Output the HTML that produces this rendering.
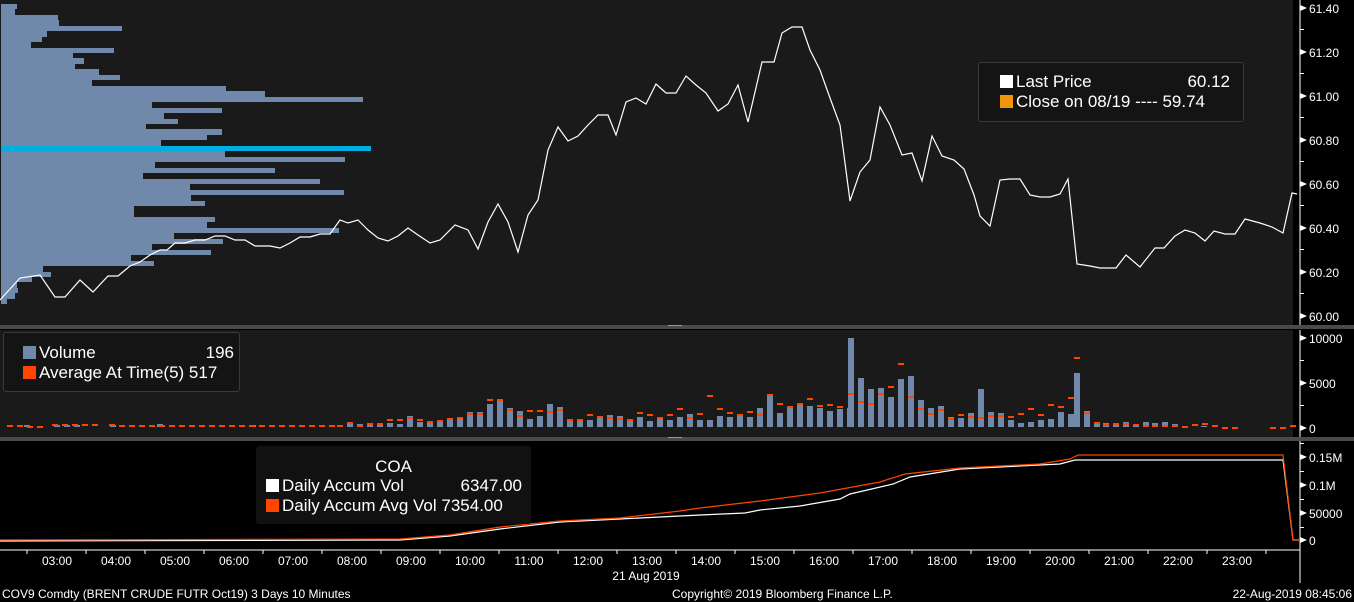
<!DOCTYPE html>
<html><head><meta charset="utf-8"><style>
html,body{margin:0;padding:0;background:#000;}
body{width:1354px;height:602px;overflow:hidden;position:relative;font-family:"Liberation Sans",sans-serif;}
svg{position:absolute;left:0;top:0;}
.lg{position:absolute;background:#141414;border:1px solid #3a3a3a;border-radius:3px;color:#fff;font-size:17px;line-height:20px;}
.sq{display:inline-block;width:13px;height:13px;vertical-align:-1px;margin-right:3px;}
.ax{font-size:12px;fill:#fff;}
</style></head><body>
<svg width="1354" height="602" xmlns="http://www.w3.org/2000/svg">
<rect x="0" y="0" width="1293" height="325" fill="#1a1a1a"/>
<rect x="0" y="330" width="1293" height="107" fill="#1a1a1a"/>
<rect x="0" y="325" width="1354" height="4" fill="#4a4a4a"/>
<rect x="0" y="437" width="1354" height="4" fill="#4a4a4a"/>
<rect x="668" y="325" width="14" height="1" fill="#999"/>
<rect x="668" y="437" width="14" height="1" fill="#999"/>
<g fill="#7089ab" id="prof"></g>
<g fill="#7089ab">
<rect x="1" y="4" width="16" height="5"/><rect x="1" y="9" width="14" height="6"/><rect x="1" y="15" width="57" height="5"/><rect x="1" y="20" width="58" height="6"/><rect x="1" y="26" width="121" height="5"/><rect x="1" y="31" width="46" height="6"/><rect x="1" y="37" width="41" height="5"/><rect x="1" y="42" width="30" height="6"/><rect x="1" y="48" width="113" height="5"/><rect x="1" y="53" width="72" height="5"/><rect x="1" y="58" width="83" height="6"/><rect x="1" y="64" width="74" height="5"/><rect x="1" y="69" width="98" height="6"/><rect x="1" y="75" width="119" height="5"/><rect x="1" y="80" width="91" height="6"/><rect x="1" y="86" width="225" height="5"/><rect x="1" y="91" width="264" height="6"/><rect x="1" y="97" width="362" height="5"/><rect x="1" y="102" width="151" height="6"/><rect x="1" y="108" width="221" height="5"/><rect x="1" y="113" width="163" height="6"/><rect x="1" y="119" width="177" height="5"/><rect x="1" y="124" width="145" height="5"/><rect x="1" y="129" width="221" height="6"/><rect x="1" y="135" width="206" height="5"/><rect x="1" y="140" width="160" height="6"/><rect x="1" y="151" width="224" height="6"/><rect x="1" y="157" width="344" height="5"/><rect x="1" y="162" width="154" height="6"/><rect x="1" y="168" width="274" height="5"/><rect x="1" y="173" width="142" height="6"/><rect x="1" y="179" width="319" height="5"/><rect x="1" y="184" width="189" height="6"/><rect x="1" y="190" width="343" height="5"/><rect x="1" y="195" width="190" height="6"/><rect x="1" y="201" width="204" height="5"/><rect x="1" y="206" width="133" height="6"/><rect x="1" y="212" width="133" height="5"/><rect x="1" y="217" width="214" height="5"/><rect x="1" y="222" width="206" height="6"/><rect x="1" y="228" width="338" height="5"/><rect x="1" y="233" width="173" height="6"/><rect x="1" y="239" width="222" height="5"/><rect x="1" y="244" width="151" height="6"/><rect x="1" y="250" width="210" height="5"/><rect x="1" y="255" width="130" height="6"/><rect x="1" y="261" width="153" height="5"/><rect x="1" y="266" width="42" height="6"/><rect x="1" y="272" width="50" height="5"/><rect x="1" y="277" width="31" height="5"/><rect x="1" y="282" width="16" height="6"/><rect x="1" y="288" width="17" height="5"/><rect x="1" y="293" width="14" height="6"/><rect x="1" y="299" width="6" height="5"/>
</g>
<rect x="1" y="146" width="370" height="5" fill="#00aee0"/>
<polyline fill="none" stroke="#fff" stroke-width="1.2" points="0,300 20,278 40,275 55,297 65,297 80,280 93,292 108,276 118,276 130,266 140,262 150,255 160,250 167,250 175,243 185,243 195,240 205,240 215,236 225,236 235,240 245,240 255,246 270,246 280,248 290,243 300,237 310,237 320,234 330,234 340,220 348,223 358,220 368,230 378,238 388,241 398,236 408,228 418,235 430,243 440,240 455,225 468,230 478,249 488,222 498,204 508,222 518,252 528,215 538,200 548,150 558,127 568,141 578,136 588,125 598,115 608,115 616,135 626,102 636,98 646,104 656,84 666,93 676,93 686,76 696,85 706,93 718,111 728,104 738,85 748,122 762,62 774,62 782,33 792,27 802,27 810,50 820,70 830,98 840,125 850,201 860,172 870,160 880,107 890,125 902,155 912,153 922,181 932,136 942,156 954,160 964,169 974,195 980,216 990,226 1000,180 1010,179 1020,179 1030,195 1040,197 1050,197 1060,194 1068,179 1077,264 1090,266 1100,268 1116,268 1126,255 1140,267 1155,248 1164,248 1175,236 1185,230 1195,233 1205,241 1214,231 1225,234 1235,234 1245,219 1260,223 1272,227 1283,233 1292,193 1297,194"/>
<!-- volume bars -->
<g fill="#7089ab">
<rect x="24" y="425" width="6" height="2"/><rect x="54" y="425" width="6" height="2"/><rect x="64" y="425" width="6" height="2"/><rect x="74" y="425" width="6" height="2"/><rect x="110" y="425" width="6" height="2"/><rect x="157" y="424" width="6" height="3"/><rect x="250" y="425" width="6" height="2"/>
<rect x="347" y="424" width="6" height="3"/><rect x="357" y="424" width="6" height="3"/><rect x="367" y="423" width="6" height="4"/><rect x="377" y="424" width="6" height="3"/><rect x="387" y="423" width="6" height="4"/><rect x="397" y="424" width="6" height="3"/><rect x="407" y="416" width="6" height="11"/><rect x="417" y="422" width="6" height="5"/><rect x="427" y="422" width="6" height="5"/><rect x="437" y="422" width="6" height="5"/><rect x="447" y="418" width="6" height="9"/><rect x="457" y="419" width="6" height="8"/><rect x="467" y="412" width="6" height="15"/><rect x="477" y="412" width="6" height="15"/><rect x="487" y="404" width="6" height="23"/><rect x="497" y="400" width="6" height="27"/><rect x="507" y="408" width="6" height="19"/><rect x="517" y="411" width="6" height="16"/><rect x="527" y="419" width="6" height="8"/><rect x="537" y="416" width="6" height="11"/><rect x="547" y="404" width="6" height="23"/><rect x="557" y="407" width="6" height="20"/><rect x="567" y="419" width="6" height="8"/><rect x="577" y="420" width="6" height="7"/><rect x="587" y="420" width="6" height="7"/><rect x="597" y="418" width="6" height="9"/><rect x="607" y="415" width="6" height="12"/><rect x="617" y="416" width="6" height="11"/><rect x="627" y="421" width="6" height="6"/><rect x="637" y="417" width="6" height="10"/><rect x="647" y="421" width="6" height="6"/><rect x="657" y="417" width="6" height="10"/><rect x="667" y="420" width="6" height="7"/><rect x="677" y="417" width="6" height="10"/><rect x="687" y="414" width="6" height="13"/><rect x="697" y="420" width="6" height="7"/><rect x="707" y="420" width="6" height="7"/><rect x="717" y="416" width="6" height="11"/><rect x="727" y="417" width="6" height="10"/><rect x="737" y="416" width="6" height="11"/><rect x="747" y="417" width="6" height="10"/><rect x="757" y="408" width="6" height="19"/><rect x="767" y="394" width="6" height="33"/><rect x="777" y="413" width="6" height="14"/><rect x="787" y="408" width="6" height="19"/><rect x="797" y="405" width="6" height="22"/><rect x="807" y="406" width="6" height="21"/><rect x="817" y="408" width="6" height="19"/><rect x="827" y="411" width="6" height="16"/><rect x="837" y="409" width="6" height="18"/><rect x="847" y="408" width="6" height="19"/><rect x="848" y="338" width="6" height="89"/><rect x="858" y="378" width="6" height="49"/><rect x="868" y="389" width="6" height="38"/><rect x="878" y="388" width="6" height="39"/><rect x="888" y="397" width="6" height="30"/><rect x="898" y="379" width="6" height="48"/><rect x="908" y="376" width="6" height="51"/><rect x="918" y="400" width="6" height="27"/><rect x="928" y="408" width="6" height="19"/><rect x="938" y="406" width="6" height="21"/><rect x="948" y="417" width="6" height="10"/><rect x="958" y="418" width="6" height="9"/><rect x="968" y="413" width="6" height="14"/><rect x="978" y="389" width="6" height="38"/><rect x="988" y="412" width="6" height="15"/><rect x="998" y="413" width="6" height="14"/><rect x="1008" y="420" width="6" height="7"/><rect x="1018" y="423" width="6" height="4"/><rect x="1028" y="422" width="6" height="5"/><rect x="1038" y="420" width="6" height="7"/><rect x="1048" y="419" width="6" height="8"/><rect x="1058" y="412" width="6" height="15"/><rect x="1068" y="414" width="6" height="13"/><rect x="1074" y="373" width="6" height="54"/><rect x="1084" y="411" width="6" height="16"/><rect x="1094" y="423" width="6" height="4"/><rect x="1103" y="423" width="6" height="4"/><rect x="1113" y="424" width="6" height="3"/><rect x="1123" y="422" width="6" height="5"/><rect x="1133" y="425" width="6" height="2"/><rect x="1143" y="422" width="6" height="5"/><rect x="1152" y="423" width="6" height="4"/><rect x="1162" y="422" width="6" height="5"/><rect x="1172" y="424" width="6" height="3"/><rect x="1201" y="426" width="6" height="1"/>
</g>
<g fill="#ff4500">
<rect x="7" y="425" width="6" height="2"/><rect x="17" y="425" width="6" height="2"/><rect x="27" y="426" width="6" height="2"/><rect x="37" y="426" width="6" height="2"/><rect x="52" y="424" width="6" height="2"/><rect x="62" y="424" width="6" height="2"/><rect x="72" y="424" width="6" height="2"/><rect x="82" y="424" width="6" height="2"/><rect x="92" y="424" width="6" height="2"/><rect x="109" y="424" width="6" height="2"/><rect x="119" y="425" width="6" height="2"/><rect x="129" y="425" width="6" height="2"/><rect x="139" y="425" width="6" height="2"/><rect x="149" y="425" width="6" height="2"/><rect x="159" y="425" width="6" height="2"/><rect x="169" y="425" width="6" height="2"/><rect x="179" y="425" width="6" height="2"/><rect x="189" y="425" width="6" height="2"/><rect x="199" y="425" width="6" height="2"/><rect x="209" y="425" width="6" height="2"/><rect x="219" y="425" width="6" height="2"/><rect x="229" y="425" width="6" height="2"/><rect x="239" y="425" width="6" height="2"/><rect x="249" y="425" width="6" height="2"/><rect x="259" y="425" width="6" height="2"/><rect x="269" y="425" width="6" height="2"/><rect x="279" y="425" width="6" height="2"/><rect x="289" y="425" width="6" height="2"/><rect x="299" y="425" width="6" height="2"/><rect x="309" y="425" width="6" height="2"/><rect x="319" y="425" width="6" height="2"/><rect x="329" y="425" width="6" height="2"/><rect x="337" y="425" width="6" height="2"/>
<rect x="347" y="422" width="6" height="2"/><rect x="357" y="425" width="6" height="2"/><rect x="367" y="423" width="6" height="2"/><rect x="377" y="423" width="6" height="2"/><rect x="387" y="419" width="6" height="2"/><rect x="397" y="419" width="6" height="2"/><rect x="407" y="417" width="6" height="2"/><rect x="417" y="419" width="6" height="2"/><rect x="427" y="421" width="6" height="2"/><rect x="437" y="420" width="6" height="2"/><rect x="447" y="418" width="6" height="2"/><rect x="457" y="417" width="6" height="2"/><rect x="467" y="413" width="6" height="2"/><rect x="477" y="413" width="6" height="2"/><rect x="487" y="399" width="6" height="2"/><rect x="497" y="399" width="6" height="2"/><rect x="507" y="409" width="6" height="2"/><rect x="517" y="415" width="6" height="2"/><rect x="527" y="410" width="6" height="2"/><rect x="537" y="410" width="6" height="2"/><rect x="547" y="411" width="6" height="2"/><rect x="557" y="409" width="6" height="2"/><rect x="567" y="419" width="6" height="2"/><rect x="577" y="419" width="6" height="2"/><rect x="587" y="414" width="6" height="2"/><rect x="597" y="416" width="6" height="2"/><rect x="607" y="417" width="6" height="2"/><rect x="617" y="418" width="6" height="2"/><rect x="627" y="419" width="6" height="2"/><rect x="637" y="412" width="6" height="2"/><rect x="647" y="414" width="6" height="2"/><rect x="657" y="417" width="6" height="2"/><rect x="667" y="414" width="6" height="2"/><rect x="677" y="408" width="6" height="2"/><rect x="687" y="417" width="6" height="2"/><rect x="697" y="413" width="6" height="2"/><rect x="707" y="395" width="6" height="2"/><rect x="717" y="408" width="6" height="2"/><rect x="727" y="412" width="6" height="2"/><rect x="737" y="414" width="6" height="2"/><rect x="747" y="411" width="6" height="2"/><rect x="757" y="414" width="6" height="2"/><rect x="767" y="394" width="6" height="2"/><rect x="777" y="403" width="6" height="2"/><rect x="787" y="406" width="6" height="2"/><rect x="797" y="403" width="6" height="2"/><rect x="807" y="398" width="6" height="2"/><rect x="817" y="405" width="6" height="2"/><rect x="827" y="404" width="6" height="2"/><rect x="837" y="406" width="6" height="2"/><rect x="848" y="393" width="6" height="2"/><rect x="858" y="401" width="6" height="2"/><rect x="868" y="403" width="6" height="2"/><rect x="878" y="393" width="6" height="2"/><rect x="888" y="386" width="6" height="2"/><rect x="898" y="363" width="6" height="2"/><rect x="908" y="396" width="6" height="2"/><rect x="918" y="408" width="6" height="2"/><rect x="928" y="413" width="6" height="2"/><rect x="938" y="409" width="6" height="2"/><rect x="948" y="418" width="6" height="2"/><rect x="958" y="414" width="6" height="2"/><rect x="968" y="416" width="6" height="2"/><rect x="978" y="417" width="6" height="2"/><rect x="988" y="415" width="6" height="2"/><rect x="998" y="415" width="6" height="2"/><rect x="1008" y="416" width="6" height="2"/><rect x="1018" y="413" width="6" height="2"/><rect x="1028" y="408" width="6" height="2"/><rect x="1038" y="414" width="6" height="2"/><rect x="1048" y="404" width="6" height="2"/><rect x="1058" y="406" width="6" height="2"/><rect x="1068" y="397" width="6" height="2"/><rect x="1074" y="357" width="6" height="2"/><rect x="1084" y="412" width="6" height="2"/><rect x="1094" y="422" width="6" height="2"/><rect x="1103" y="424" width="6" height="2"/><rect x="1113" y="423" width="6" height="2"/><rect x="1123" y="423" width="6" height="2"/><rect x="1133" y="424" width="6" height="2"/><rect x="1143" y="425" width="6" height="2"/><rect x="1152" y="425" width="6" height="2"/><rect x="1162" y="425" width="6" height="2"/><rect x="1172" y="425" width="6" height="2"/><rect x="1182" y="426" width="6" height="2"/><rect x="1192" y="424" width="6" height="2"/><rect x="1202" y="423" width="6" height="2"/><rect x="1212" y="425" width="6" height="2"/><rect x="1222" y="427" width="6" height="2"/><rect x="1232" y="427" width="6" height="2"/><rect x="1270" y="427" width="6" height="2"/><rect x="1280" y="427" width="6" height="2"/><rect x="1290" y="425" width="6" height="2"/>
</g>
<!-- accum lines -->
<polyline fill="none" stroke="#fff" stroke-width="1.2" points="0,541 400,540 450,536 500,529 560,522 620,519 700,515 745,513 760,510 800,506 840,499 850,494 893,484 910,477 960,469 1000,467 1040,465 1060,464 1075,460 1283,460 1293,540 1299,540"/>
<polyline fill="none" stroke="#ff4500" stroke-width="1.2" points="0,540 400,539 450,535 500,527 560,521 620,518 680,511 700,508 760,501 820,493 880,482 905,474 960,468 1040,464 1070,459 1078,455 1283,455 1293,540 1299,540"/>
<!-- axes -->
<line x1="1300" y1="0" x2="1300" y2="325" stroke="#fff"/>
<line x1="1300" y1="330" x2="1300" y2="437" stroke="#fff"/>
<line x1="1300" y1="441" x2="1300" y2="583" stroke="#fff"/>
<line x1="0" y1="550" x2="1300" y2="550" stroke="#fff"/>
<g fill="#fff">
<path d="M1300,5 l7,3 l-7,3z"/><path d="M1300,49 l7,3 l-7,3z"/><path d="M1300,93 l7,3 l-7,3z"/><path d="M1300,137 l7,3 l-7,3z"/><path d="M1300,181 l7,3 l-7,3z"/><path d="M1300,225 l7,3 l-7,3z"/><path d="M1300,269 l7,3 l-7,3z"/><path d="M1300,313 l7,3 l-7,3z"/>
<path d="M1300,335 l7,3 l-7,3z"/><path d="M1300,380 l7,3 l-7,3z"/><path d="M1300,425 l7,3 l-7,3z"/>
<path d="M1300,454 l7,3 l-7,3z"/><path d="M1300,482 l7,3 l-7,3z"/><path d="M1300,510 l7,3 l-7,3z"/><path d="M1300,537 l7,3 l-7,3z"/>
<rect x="1300" y="29" width="4" height="1"/><rect x="1300" y="73" width="4" height="1"/><rect x="1300" y="117" width="4" height="1"/><rect x="1300" y="161" width="4" height="1"/><rect x="1300" y="205" width="4" height="1"/><rect x="1300" y="249" width="4" height="1"/><rect x="1300" y="293" width="4" height="1"/>
<rect x="1300" y="360" width="4" height="1"/><rect x="1300" y="405" width="4" height="1"/>
<rect x="1300" y="443" width="4" height="1"/><rect x="1300" y="471" width="4" height="1"/><rect x="1300" y="499" width="4" height="1"/><rect x="1300" y="527" width="4" height="1"/>
</g>
<g stroke="#fff">
<line x1="27" y1="550" x2="27" y2="554"/><line x1="86" y1="550" x2="86" y2="554"/><line x1="145" y1="550" x2="145" y2="554"/><line x1="204" y1="550" x2="204" y2="554"/><line x1="263" y1="550" x2="263" y2="554"/><line x1="322" y1="550" x2="322" y2="554"/><line x1="381" y1="550" x2="381" y2="554"/><line x1="440" y1="550" x2="440" y2="554"/><line x1="499" y1="550" x2="499" y2="554"/><line x1="558" y1="550" x2="558" y2="554"/><line x1="617" y1="550" x2="617" y2="554"/><line x1="676" y1="550" x2="676" y2="554"/><line x1="735" y1="550" x2="735" y2="554"/><line x1="794" y1="550" x2="794" y2="554"/><line x1="853" y1="550" x2="853" y2="554"/><line x1="912" y1="550" x2="912" y2="554"/><line x1="971" y1="550" x2="971" y2="554"/><line x1="1030" y1="550" x2="1030" y2="554"/><line x1="1089" y1="550" x2="1089" y2="554"/><line x1="1148" y1="550" x2="1148" y2="554"/><line x1="1207" y1="550" x2="1207" y2="554"/><line x1="1266" y1="550" x2="1266" y2="554"/>
</g>
<g class="ax">
<text x="1309" y="13">61.40</text><text x="1309" y="57">61.20</text><text x="1309" y="101">61.00</text><text x="1309" y="145">60.80</text><text x="1309" y="189">60.60</text><text x="1309" y="233">60.40</text><text x="1309" y="277">60.20</text><text x="1309" y="321">60.00</text>
<text x="1309" y="343">10000</text><text x="1309" y="388">5000</text><text x="1309" y="433">0</text>
<text x="1309" y="462">0.15M</text><text x="1309" y="490">0.1M</text><text x="1309" y="518">50000</text><text x="1309" y="545">0</text>
<g text-anchor="middle">
<text x="57" y="565">03:00</text><text x="116" y="565">04:00</text><text x="175" y="565">05:00</text><text x="234" y="565">06:00</text><text x="293" y="565">07:00</text><text x="352" y="565">08:00</text><text x="411" y="565">09:00</text><text x="470" y="565">10:00</text><text x="529" y="565">11:00</text><text x="588" y="565">12:00</text><text x="647" y="565">13:00</text><text x="706" y="565">14:00</text><text x="765" y="565">15:00</text><text x="824" y="565">16:00</text><text x="883" y="565">17:00</text><text x="942" y="565">18:00</text><text x="1001" y="565">19:00</text><text x="1060" y="565">20:00</text><text x="1119" y="565">21:00</text><text x="1178" y="565">22:00</text><text x="1237" y="565">23:00</text>
<text x="646" y="580">21 Aug 2019</text>
</g>
<text x="2" y="598">COV9 Comdty (BRENT CRUDE FUTR  Oct19) 3 Days 10 Minutes</text>
<text x="672" y="598">Copyright© 2019 Bloomberg Finance L.P.</text>
<text x="1352" y="598" text-anchor="end">22-Aug-2019 08:45:06</text>
</g>
<!-- legend tree glyphs -->
<g stroke="#888" fill="none" stroke-width="1">
<rect x="988.5" y="78.5" width="6" height="6"/><line x1="990" y1="81.5" x2="993" y2="81.5"/><path d="M991.5,85 V101.5 H996"/>
<rect x="12.5" y="348.5" width="6" height="6"/><line x1="14" y1="351.5" x2="17" y2="351.5"/><path d="M15.5,355 V371.5 H20"/>
</g>
</svg>
<div class="lg" style="left:978px;top:62px;width:264px;height:58px;">
 <div style="position:absolute;left:21px;top:9px;"><span class="sq" style="background:#fff"></span>Last Price</div>
 <div style="position:absolute;right:13px;top:9px;">60.12</div>
 <div style="position:absolute;left:21px;top:29px;"><span class="sq" style="background:#f0960a"></span>Close on 08/19 ---- 59.74</div>
</div>
<div class="lg" style="left:3px;top:332px;width:235px;height:58px;">
 <div style="position:absolute;left:19px;top:10px;"><span class="sq" style="background:#7089ab"></span>Volume</div>
 <div style="position:absolute;right:5px;top:10px;">196</div>
 <div style="position:absolute;left:19px;top:30px;"><span class="sq" style="background:#ff4500"></span>Average At Time(5) 517</div>
</div>
<div class="lg" style="left:256px;top:446px;width:273px;height:76px;background:#111;border-color:#111;">
 <div style="position:absolute;left:0;width:273px;text-align:center;top:10px;">COA</div>
 <div style="position:absolute;left:9px;top:29px;"><span class="sq" style="background:#fff"></span>Daily Accum Vol</div>
 <div style="position:absolute;right:8px;top:29px;">6347.00</div>
 <div style="position:absolute;left:9px;top:49px;"><span class="sq" style="background:#ff4500"></span>Daily Accum Avg Vol 7354.00</div>
</div>
</body></html>
